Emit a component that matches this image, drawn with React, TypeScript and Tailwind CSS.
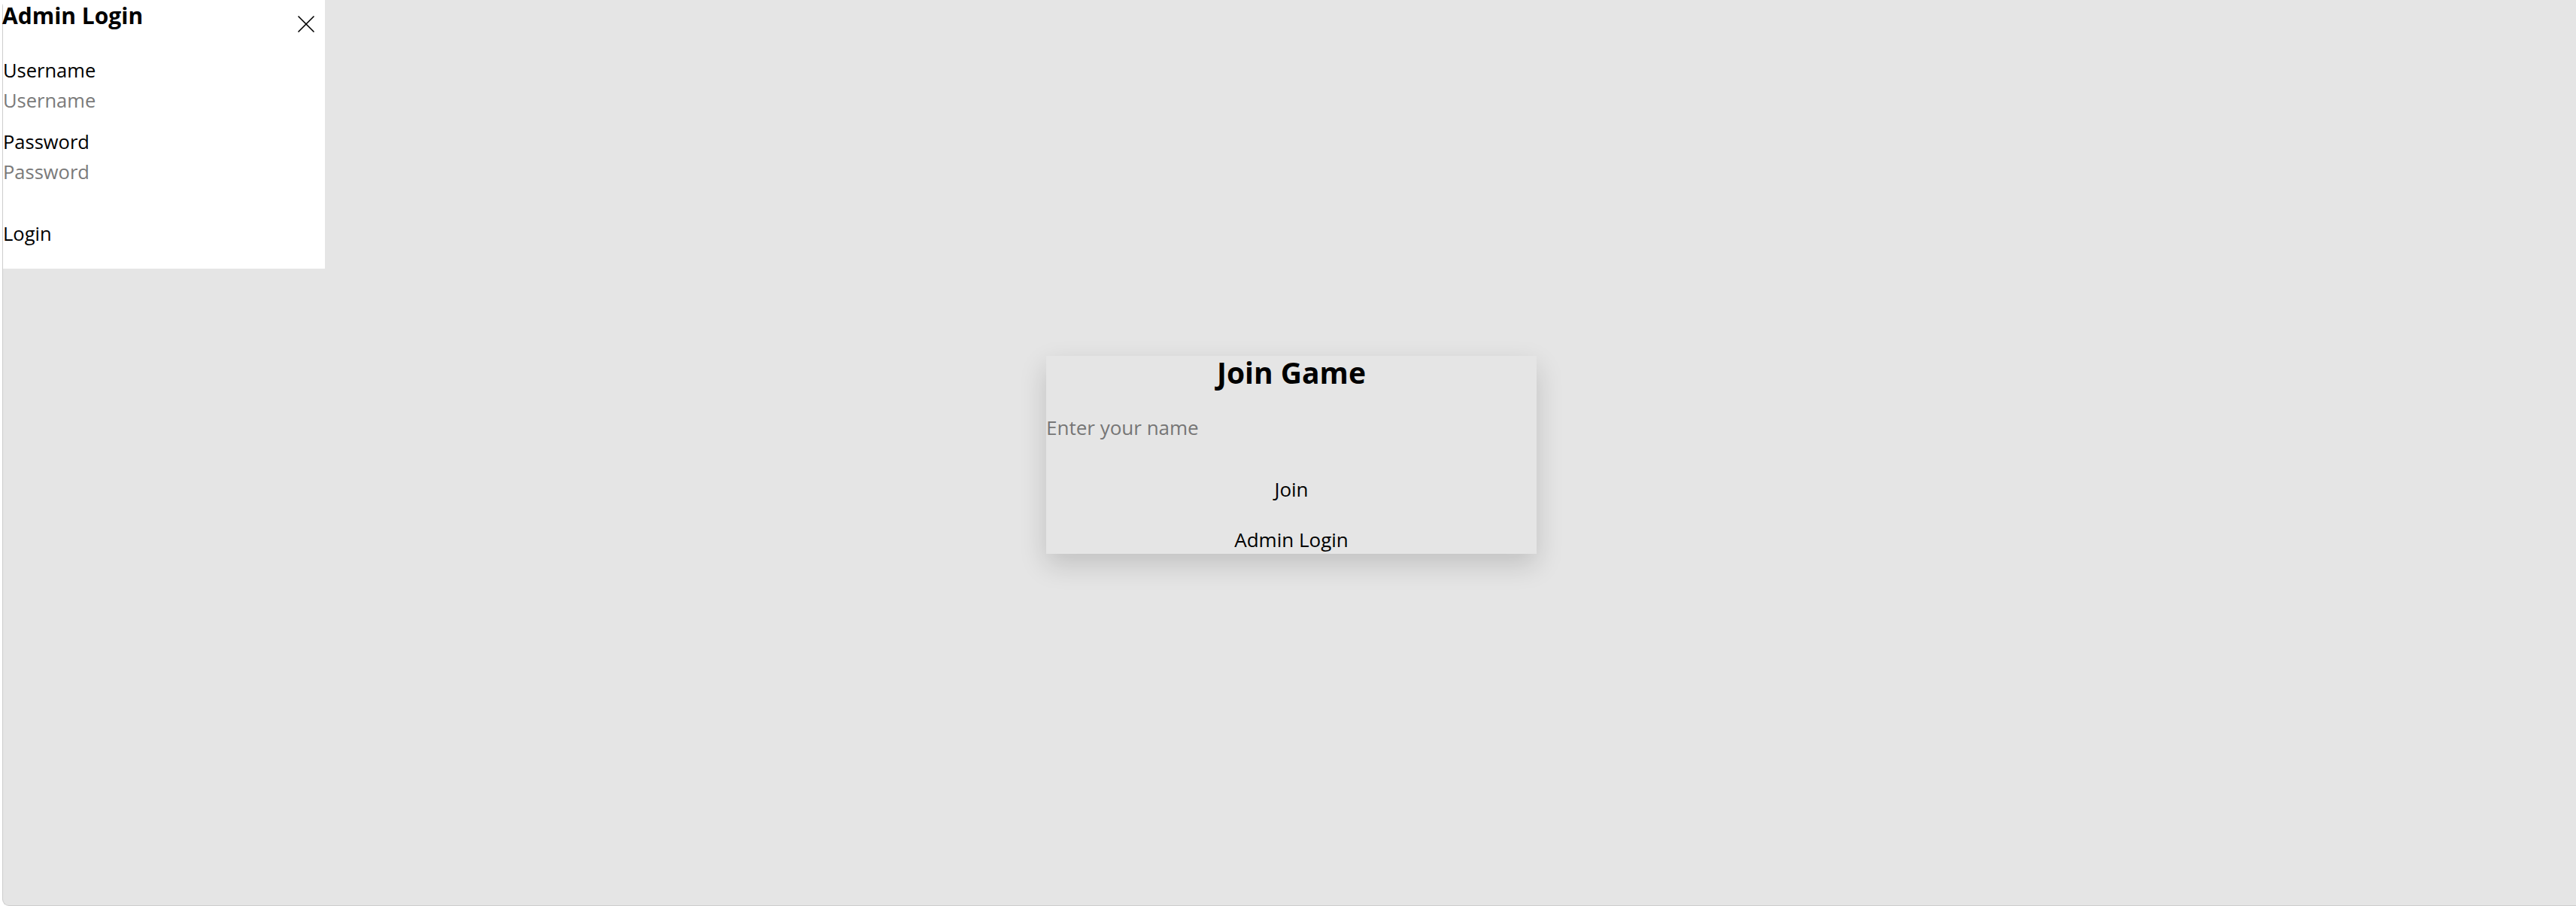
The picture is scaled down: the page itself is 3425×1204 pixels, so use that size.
import { X } from "lucide-react";

const AdminPanel = () => {
    return (
        <div className="absolute top-0 left-0 w-[428px] h-[357px] bg-white text-black">
            <div className="flex flex-row items-start justify-between h-[42px]">
                <h3 className="text-[30px] leading-[42px] font-bold -ml-[1px]">Admin Login</h3>
                <button className="mt-[12px] mr-[5px] bg-transparent">
                    <X className="w-[40px] h-[40px]" strokeWidth={1} />
                </button>
            </div>

            <label className="block mt-[33px] text-[25.5px] leading-[36px]">Username</label>
            <input
                className="block w-full mt-[4px] h-[36px] text-[25.5px] leading-[36px] bg-transparent outline-none placeholder:text-[#7a7a7a]"
                placeholder="Username"
            />

            <label className="block mt-[19px] text-[25.5px] leading-[36px]">Password</label>
            <input
                type="password"
                className="block w-full mt-[4px] h-[36px] text-[25.5px] leading-[36px] bg-transparent outline-none placeholder:text-[#7a7a7a]"
                placeholder="Password"
            />

            <button className="block mt-[46px] text-[25.5px] leading-[36px] bg-transparent">Login</button>
        </div>
    )
}

const JoinCard = () => {
    return (
        <div className="w-[652px] h-[263px] bg-[#e5e5e5] shadow-[0_14px_34px_rgba(0,0,0,0.16)] flex flex-col text-black">
            <h2 className="text-center text-[39px] leading-[44px] font-bold">Join Game</h2>
            <input
                className="block w-full mt-[33px] h-[36px] text-[26px] leading-[36px] bg-transparent outline-none placeholder:text-[#767676]"
                placeholder="Enter your name"
            />
            <button className="block w-full mt-[46px] text-center text-[26px] leading-[36px] bg-transparent">Join</button>
            <button className="block w-full mt-[31px] text-center text-[26px] leading-[36px] bg-transparent">Admin Login</button>
        </div>
    )
}

export default function App() {
    return (
        <div className="h-screen w-full bg-white pl-[3px] font-['Open_Sans',sans-serif]">
            <div className="relative h-full rounded-l-[9px] border-l border-b border-[#cdcdcd] bg-[#e5e5e5]">
                <AdminPanel />
                <div className="flex h-full items-center justify-center pt-[6px] pl-[5px]">
                    <JoinCard />
                </div>
            </div>
        </div>
    )
}
